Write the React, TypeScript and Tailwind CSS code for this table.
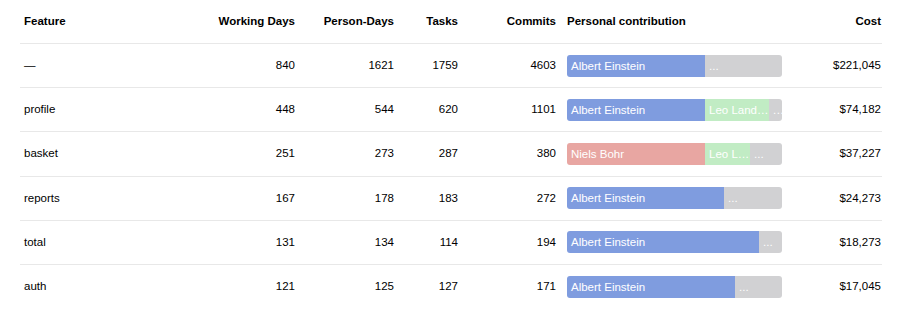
import React from 'react';

type Segment = { name: string; width: number; color: string };

type Row = {
    feature: string;
    workingDays: number;
    personDays: number;
    tasks: number;
    commits: number;
    contribution: Segment[];
    cost: string;
};

const BLUE = 'bg-[#7f9cdf]';
const GREEN = 'bg-[#c1ecc4]';
const RED = 'bg-[#e8a6a2]';
const GRAY = 'bg-[#d1d1d3]';

// widths are px of a 215px bar
const rows: Row[] = [
    {
        feature: '—', workingDays: 840, personDays: 1621, tasks: 1759, commits: 4603, cost: '$221,045',
        contribution: [
            { name: 'Albert Einstein', width: 138, color: BLUE },
            { name: '...', width: 77, color: GRAY },
        ],
    },
    {
        feature: 'profile', workingDays: 448, personDays: 544, tasks: 620, commits: 1101, cost: '$74,182',
        contribution: [
            { name: 'Albert Einstein', width: 138, color: BLUE },
            { name: 'Leo Landau', width: 64, color: GREEN },
            { name: '...', width: 13, color: GRAY },
        ],
    },
    {
        feature: 'basket', workingDays: 251, personDays: 273, tasks: 287, commits: 380, cost: '$37,227',
        contribution: [
            { name: 'Niels Bohr', width: 138, color: RED },
            { name: 'Leo Landau', width: 45, color: GREEN },
            { name: '...', width: 32, color: GRAY },
        ],
    },
    {
        feature: 'reports', workingDays: 167, personDays: 178, tasks: 183, commits: 272, cost: '$24,273',
        contribution: [
            { name: 'Albert Einstein', width: 157, color: BLUE },
            { name: '...', width: 58, color: GRAY },
        ],
    },
    {
        feature: 'total', workingDays: 131, personDays: 134, tasks: 114, commits: 194, cost: '$18,273',
        contribution: [
            { name: 'Albert Einstein', width: 192, color: BLUE },
            { name: '...', width: 23, color: GRAY },
        ],
    },
    {
        feature: 'auth', workingDays: 121, personDays: 125, tasks: 127, commits: 171, cost: '$17,045',
        contribution: [
            { name: 'Albert Einstein', width: 168, color: BLUE },
            { name: '...', width: 47, color: GRAY },
        ],
    },
];

const grid = 'grid grid-cols-[180px_99px_99px_64px_98px_225px_100px] items-center';

const ContributionBar = ({ segments }: { segments: Segment[] }) => (
    <div className="flex w-[215px] h-[22px] rounded-[3px] overflow-hidden">
        {segments.map((s, i) => (
            <div
                key={i}
                className={`${s.color} h-full shrink-0 pl-[4px] text-white leading-[22px] whitespace-nowrap overflow-hidden text-ellipsis`}
                style={{ width: s.width }}
            >
                {s.name}
            </div>
        ))}
    </div>
);

const App = () => {
    return (
        <div className="bg-white w-[902px] h-[311px] px-[20px] text-[11.5px] text-black font-['Liberation_Sans',Arial,sans-serif]">
            {/* Header */}
            <div className={`${grid} h-[44px] border-b border-[#e8e8e8] font-bold`}>
                <div className="px-[4px]">Feature</div>
                <div className="px-[4px] text-right">Working Days</div>
                <div className="px-[4px] text-right">Person-Days</div>
                <div className="px-[4px] text-right">Tasks</div>
                <div className="px-[4px] text-right">Commits</div>
                <div className="pl-[7px]">Personal contribution</div>
                <div className="px-[4px] text-right">Cost</div>
            </div>

            {rows.map((r, i) => (
                <div
                    key={r.feature}
                    className={`${grid} h-[44.2px] ${i < rows.length - 1 ? 'border-b border-[#e8e8e8]' : ''}`}
                >
                    <div className="px-[4px]">{r.feature}</div>
                    <div className="px-[4px] text-right">{r.workingDays}</div>
                    <div className="px-[4px] text-right">{r.personDays}</div>
                    <div className="px-[4px] text-right">{r.tasks}</div>
                    <div className="px-[4px] text-right">{r.commits}</div>
                    <div className="pl-[7px]">
                        <ContributionBar segments={r.contribution} />
                    </div>
                    <div className="px-[4px] text-right">{r.cost}</div>
                </div>
            ))}
        </div>
    );
};

export default App;
